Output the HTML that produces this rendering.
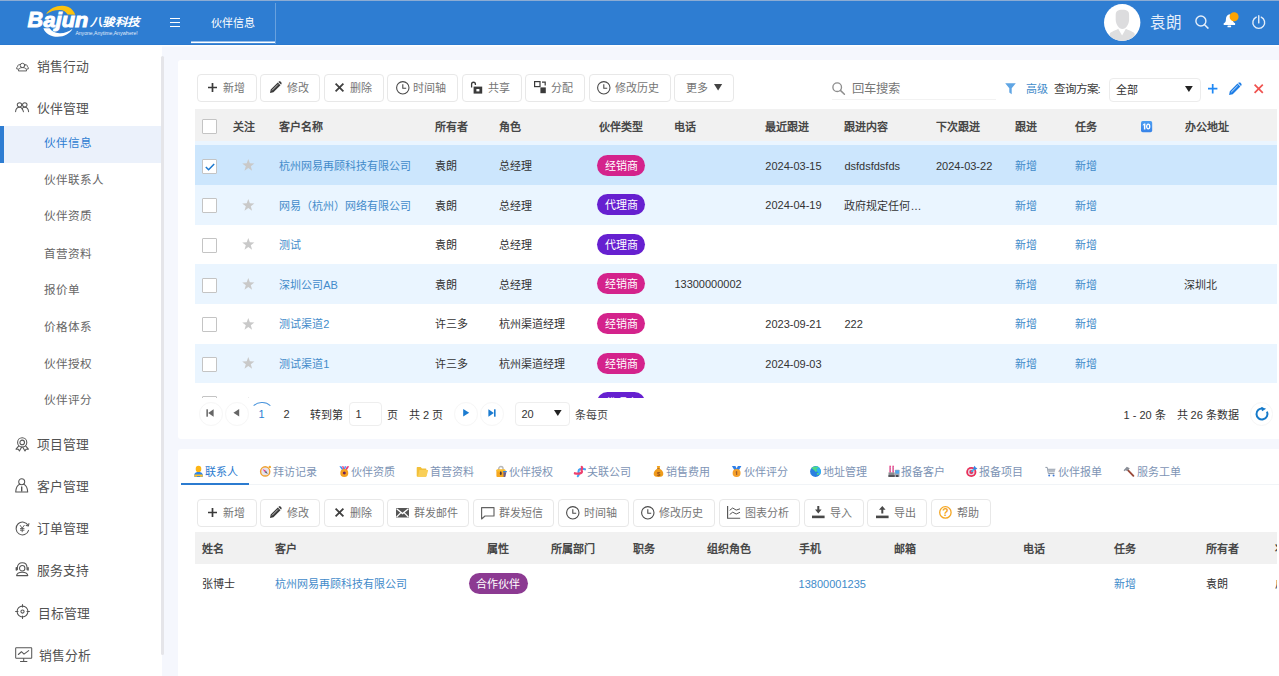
<!DOCTYPE html>
<html lang="zh-CN"><head><meta charset="utf-8"><title>伙伴信息</title>
<style>
html,body{margin:0;padding:0}
html{width:1279px;height:676px;overflow:hidden}
body{width:1279px;height:676px;overflow:hidden;position:relative;background:#f5f7fd;font-family:"Liberation Sans",sans-serif;font-size:11px;color:#333}
.a{position:absolute;display:block}
svg{overflow:visible}
.t{position:absolute;white-space:nowrap}
.btn{position:absolute;box-sizing:border-box;border:1px solid #e8e8e8;border-radius:4px;background:#fff;height:27.4px}
.pill{position:absolute;border-radius:11px;color:#fff;font-size:11px;text-align:center;height:21px;line-height:22px;white-space:nowrap}
.cb{position:absolute;box-sizing:border-box;width:14.8px;height:14.8px;border:1px solid #c4c4c4;background:#fff;border-radius:1px}
.circ{position:absolute;box-sizing:border-box;width:23.6px;height:23.6px;border:1px solid #f6f6f6;border-radius:50%;background:#fff}
</style></head><body>

<div class="a" style="left:0.00px;top:0.00px;width:1279.00px;height:45.00px;background:#2e7dd2"></div>
<div class="a" style="left:0.00px;top:0.00px;width:1279.00px;height:1.00px;background:#8cacd3"></div>
<div class="a" style="left:0.00px;top:44.00px;width:1279.00px;height:1.00px;background:#2a79cf"></div>
<div class="a" style="left:0.00px;top:45.00px;width:1279.00px;height:1.00px;background:#fff"></div>
<div class="a" style="left:0.00px;top:46.00px;width:1279.00px;height:1.00px;background:#fafbfe"></div>
<svg class="a" style="left:0.00px;top:0.00px;" width="160" height="44" viewBox="0 0 160 44" preserveAspectRatio="none">
<path d="M46 14 C50 8.5 56 5.6 62.5 5.8 C69 6 73.5 9.5 75.2 14.8 L67.6 14.6 C66 11.6 63.5 10 60 9.9 C55 9.8 50 11.4 46 14 Z" fill="#fcc20e"/>
<path d="M43.4 28.2 C45 33.5 51 36.8 57.5 36.8 C64.5 36.8 70 33.5 72.6 28.8 C68.5 32 64 33.4 59.5 33.2 C55 33 51.5 31.5 49.6 28.3 Z" fill="#fff"/>
<text x="27.6" y="26.8" font-family="Liberation Sans, sans-serif" font-size="22" font-weight="bold" font-style="italic" fill="#fff" stroke="#fff" stroke-width="0.9" textLength="15.6" lengthAdjust="spacingAndGlyphs">B</text>
<text x="43.6" y="26.8" font-family="Liberation Sans, sans-serif" font-size="20" font-weight="bold" font-style="italic" fill="#fff" stroke="#fff" stroke-width="1" textLength="44.6" lengthAdjust="spacingAndGlyphs">ajun</text>
<text x="90" y="26" font-family="Liberation Sans, sans-serif" font-size="11.3" font-weight="bold" font-style="italic" fill="#fff" textLength="49" lengthAdjust="spacingAndGlyphs">八骏科技</text>
<text x="75.4" y="35.2" font-family="Liberation Sans, sans-serif" font-size="5.5" fill="#e3eefa" textLength="62.3" lengthAdjust="spacingAndGlyphs">Anyone,Anytime,Anywhere!</text>
</svg>
<div class="a" style="left:169.60px;top:17.70px;width:10.90px;height:1.50px;background:#fff"></div>
<div class="a" style="left:169.60px;top:21.80px;width:10.90px;height:1.50px;background:#fff"></div>
<div class="a" style="left:169.60px;top:25.90px;width:10.90px;height:1.50px;background:#fff"></div>
<div class="a" style="left:275.00px;top:3.00px;width:1.00px;height:41.30px;background:rgba(255,255,255,.28)"></div>
<div class="a" style="left:191.00px;top:41.00px;width:84.00px;height:1.00px;background:rgba(255,255,255,.5)"></div>
<div class="a" style="left:191.00px;top:42.00px;width:84.00px;height:1.00px;background:#fff"></div>
<div class="a" style="left:191.00px;top:43.00px;width:84.00px;height:1.00px;background:rgba(255,255,255,.12)"></div>
<div class="t " style="left:211.30px;top:15px;font-size:11px;line-height:16px;color:#fff;font-weight:normal;">伙伴信息</div>
<svg class="a" style="left:1103.80px;top:3.50px;" width="36.4" height="37" viewBox="0 0 36.4 37" preserveAspectRatio="none">
<defs><clipPath id="av"><ellipse cx="18.2" cy="18.5" rx="18.2" ry="18.5"/></clipPath></defs>
<ellipse cx="18.2" cy="18.5" rx="18.2" ry="18.5" fill="#fff"/>
<g clip-path="url(#av)">
<path d="M14.2 24.7 L18.1 31.4 L21.9 24.7 C25 26.5 29.5 27.5 30.6 29.5 L31.5 38 L5 38 L5.8 29.5 C7 27.5 11.5 26.5 14.2 24.7 Z" fill="#dededf"/>
<path d="M11.7 11 C11.7 7.4 13.5 5.8 18.4 5.8 C23.3 5.8 25.1 7.4 25.1 11 L25.1 15.5 C25.1 20 22 25.1 18.4 25.1 C14.8 25.1 11.7 20 11.7 15.5 Z" fill="#dcdcde"/>
</g></svg>
<div class="t " style="left:1150.20px;top:13px;font-size:15.6px;line-height:20px;color:#e4eefa;font-weight:normal;">袁朗</div>
<svg class="a" style="left:1190.00px;top:10.00px;" width="20" height="20" viewBox="0 0 20 20" preserveAspectRatio="none"><circle cx="10.9" cy="11" r="5" fill="none" stroke="#e6effa" stroke-width="1.4"/><path d="M14.6 14.8 L18 18.1" stroke="#e6effa" stroke-width="1.5" stroke-linecap="round"/></svg>
<svg class="a" style="left:1222.00px;top:11.60px;" width="18" height="18" viewBox="0 0 18 18" preserveAspectRatio="none">
<path d="M7.4 2.2 C4.9 2.9 3.9 5 3.9 7.4 C3.9 9.6 3.2 10.4 1.7 11.2 L1.7 12.9 L13.1 12.9 L13.1 11.2 C11.6 10.4 10.9 9.6 10.9 7.4 C10.9 5 9.9 2.9 7.4 2.2 Z" fill="#fff"/>
<rect x="5.4" y="13.6" width="3.8" height="1.7" rx=".85" fill="#fff"/>
<circle cx="12.1" cy="4.7" r="4.5" fill="#fda403"/></svg>
<svg class="a" style="left:1250.00px;top:13.00px;" width="18" height="18" viewBox="0 0 18 18" preserveAspectRatio="none"><path d="M6.26 4.15 A5.9 5.9 0 1 0 11.24 4.15" fill="none" stroke="#e6effa" stroke-width="1.4" stroke-linecap="round"/><path d="M8.75 2.7 L8.75 9.9" stroke="#e6effa" stroke-width="1.4" stroke-linecap="round"/></svg>
<div class="a" style="left:0.00px;top:45.00px;width:161.50px;height:631.00px;background:#fff"></div>
<div class="a" style="left:161.00px;top:56.00px;width:3.20px;height:599.00px;background:#e5e5e9;border-radius:1.6px"></div>
<div class="a" style="left:0.00px;top:126.00px;width:161.20px;height:37.00px;background:#ebf1fb"></div>
<div class="a" style="left:0.00px;top:126.00px;width:3.70px;height:37.00px;background:#2e7dd2"></div>
<div class="t " style="left:36.90px;top:58px;font-size:12.8px;line-height:18px;color:#525252;font-weight:normal;">销售行动</div>
<div class="t " style="left:36.90px;top:100px;font-size:12.8px;line-height:18px;color:#525252;font-weight:normal;">伙伴管理</div>
<div class="t " style="left:36.90px;top:436px;font-size:12.8px;line-height:18px;color:#525252;font-weight:normal;">项目管理</div>
<div class="t " style="left:36.90px;top:478px;font-size:12.8px;line-height:18px;color:#525252;font-weight:normal;">客户管理</div>
<div class="t " style="left:36.90px;top:520px;font-size:12.8px;line-height:18px;color:#525252;font-weight:normal;">订单管理</div>
<div class="t " style="left:36.90px;top:562px;font-size:12.8px;line-height:18px;color:#525252;font-weight:normal;">服务支持</div>
<div class="t " style="left:37.90px;top:605px;font-size:12.8px;line-height:18px;color:#525252;font-weight:normal;">目标管理</div>
<div class="t " style="left:38.90px;top:647px;font-size:12.8px;line-height:18px;color:#525252;font-weight:normal;">销售分析</div>
<div class="t " style="left:43.70px;top:134px;font-size:11.6px;line-height:18px;color:#2e7dd2;font-weight:normal;">伙伴信息</div>
<div class="t " style="left:43.70px;top:171px;font-size:11.6px;line-height:18px;color:#666;font-weight:normal;">伙伴联系人</div>
<div class="t " style="left:43.70px;top:207px;font-size:11.6px;line-height:18px;color:#666;font-weight:normal;">伙伴资质</div>
<div class="t " style="left:43.70px;top:245px;font-size:11.6px;line-height:18px;color:#666;font-weight:normal;">首营资料</div>
<div class="t " style="left:43.70px;top:281px;font-size:11.6px;line-height:18px;color:#666;font-weight:normal;">报价单</div>
<div class="t " style="left:43.70px;top:318px;font-size:11.6px;line-height:18px;color:#666;font-weight:normal;">价格体系</div>
<div class="t " style="left:43.70px;top:355px;font-size:11.6px;line-height:18px;color:#666;font-weight:normal;">伙伴授权</div>
<div class="t " style="left:43.70px;top:391px;font-size:11.6px;line-height:18px;color:#666;font-weight:normal;">伙伴评分</div>
<svg class="a" style="left:15.60px;top:62.10px;" width="13" height="9.4" viewBox="0 0 14 11" preserveAspectRatio="none"><g fill="none" stroke="#555" stroke-width="1.05" stroke-linecap="round" stroke-linejoin="round"><circle cx="7" cy="4" r="2.5"/><path d="M2.6 10 C2.6 7.6 4.4 6.5 7 6.5 C9.6 6.5 11.4 7.6 11.4 10 Z"/><path d="M4.4 3 C3 2.6 1.8 3.6 2 5 C0.9 5.6 0.6 6.8 0.8 8.2 L2.4 8.2 M9.6 3 C11 2.6 12.2 3.6 12 5 C13.1 5.6 13.4 6.8 13.2 8.2 L11.6 8.2"/></g></svg>
<svg class="a" style="left:15.00px;top:101.90px;" width="14.2" height="10.6" viewBox="0 0 14.5 11.5" preserveAspectRatio="none"><g fill="none" stroke="#555" stroke-width="1.05" stroke-linecap="round" stroke-linejoin="round"><circle cx="4.6" cy="3.1" r="2.3"/><circle cx="10" cy="3.1" r="2.3"/><path d="M0.6 10.6 C0.8 7.6 2.4 5.8 4.6 5.8 C6 5.8 7 6.5 7.3 7.4 C7.6 6.5 8.6 5.8 10 5.8 C12.2 5.8 13.6 7.6 13.9 10.6"/><path d="M7.3 7.4 C8 8.2 8.4 9.2 8.6 10.6"/></g></svg>
<svg class="a" style="left:14.80px;top:437.20px;" width="14.5" height="14.5" viewBox="0 0 14.5 14.5" preserveAspectRatio="none"><g fill="none" stroke="#555" stroke-width="1.05" stroke-linecap="round" stroke-linejoin="round"><circle cx="7.2" cy="5.4" r="4.6"/><circle cx="7.2" cy="5.4" r="2.3"/><path d="M3.8 8.8 L1 12.2 L3.4 12.2 L4.4 14 L6.6 10.2 M10.6 8.8 L13.4 12.2 L11 12.2 L10 14 L7.8 10.2"/></g></svg>
<svg class="a" style="left:15.40px;top:478.00px;" width="13.5" height="15" viewBox="0 0 13.5 15" preserveAspectRatio="none"><g fill="none" stroke="#555" stroke-width="1.05" stroke-linecap="round" stroke-linejoin="round"><circle cx="6.7" cy="3.8" r="3"/><path d="M4.6 6.2 C2 7.4 0.9 9.8 0.7 14 L12.7 14 C12.5 9.8 11.4 7.4 8.8 6.2"/><path d="M6.7 9 L6.7 13" stroke-width="1.4"/></g></svg>
<svg class="a" style="left:14.60px;top:520.50px;" width="15" height="15" viewBox="0 0 15 15" preserveAspectRatio="none"><g fill="none" stroke="#555" stroke-width="1.05" stroke-linecap="round" stroke-linejoin="round"><path d="M13.2 4.6 A6.4 6.4 0 1 0 13.6 9.4"/><path d="M13.9 2.6 L13.4 4.9 L11.2 4.4"/><path d="M5.2 4.4 L7.2 7.2 L9.2 4.4 M7.2 7.2 L7.2 10.8 M5.4 7.6 L9 7.6 M5.4 9.2 L9 9.2" stroke-width=".9"/></g></svg>
<svg class="a" style="left:14.80px;top:562.20px;" width="14.5" height="14.5" viewBox="0 0 14.5 14.5" preserveAspectRatio="none"><g fill="none" stroke="#555" stroke-width="1.05" stroke-linecap="round" stroke-linejoin="round"><circle cx="7.2" cy="6.2" r="2.7"/><path d="M2.4 7.6 L2.4 5.6 C2.4 2.6 4.4 0.8 7.2 0.8 C10 0.8 12 2.6 12 5.6 L12 7.6"/><path d="M1.4 5.8 L1.4 8 M13 5.8 L13 8" stroke-width="1.6"/><path d="M1.6 13.6 C1.8 11.2 3.6 10.2 7.2 10.2 C10.8 10.2 12.6 11.2 12.8 13.6 Z"/></g></svg>
<svg class="a" style="left:14.60px;top:604.00px;" width="15" height="15" viewBox="0 0 15 15" preserveAspectRatio="none"><g fill="none" stroke="#555" stroke-width="1.05" stroke-linecap="round" stroke-linejoin="round"><circle cx="7.5" cy="7.5" r="5.4"/><circle cx="7.5" cy="7.5" r="1.6"/><path d="M7.5 0.6 L7.5 3 M7.5 12 L7.5 14.4 M0.6 7.5 L3 7.5 M12 7.5 L14.4 7.5"/></g></svg>
<svg class="a" style="left:14.80px;top:647.00px;" width="17.6" height="15.3" viewBox="0 0 18 15.5" preserveAspectRatio="none"><g fill="none" stroke="#555" stroke-width="1.05" stroke-linecap="round" stroke-linejoin="round"><rect x="0.7" y="0.7" width="16.4" height="10.8" rx="0.6"/><path d="M3.4 7.6 L6.6 4.8 L9.2 7.2 L14 3.6"/><path d="M8.9 11.6 L8.9 14.4 M5.6 14.6 L12.2 14.6"/></g></svg>
<div class="a" style="left:177.60px;top:59.60px;width:1101.40px;height:379.00px;background:#fff;border-radius:3px 0 0 3px"></div>
<div class="btn" style="left:197.20px;top:74.20px;width:59.60px"></div>
<div class="t " style="left:223.20px;top:80px;font-size:11px;line-height:16px;color:#757575;font-weight:normal;">新增</div>
<svg class="a" style="left:207.90px;top:82.80px;" width="9" height="9" viewBox="0 0 9 9" preserveAspectRatio="none"><path d="M4.5 0 L4.5 9 M0 4.5 L9 4.5" stroke="#3a3a3a" stroke-width="1.7"/></svg>
<div class="btn" style="left:260.40px;top:74.20px;width:59.80px"></div>
<div class="t " style="left:287.10px;top:80px;font-size:11px;line-height:16px;color:#757575;font-weight:normal;">修改</div>
<svg class="a" style="left:269.20px;top:80.80px;" width="13" height="13" viewBox="0 0 13 13" preserveAspectRatio="none"><path d="M1 12 L1.7 8.6 L8.8 1.5 L11.5 4.2 L4.4 11.3 Z M9.6 0.8 C10.2 0.2 11.1 0.2 11.7 0.8 L12.2 1.3 C12.8 1.9 12.8 2.8 12.2 3.4 L12 3.6 L9.4 1 Z" fill="#3a3a3a"/><path d="M3 9.4 L9 3.4" stroke="#fff" stroke-width=".7"/></svg>
<div class="btn" style="left:324.00px;top:74.20px;width:59.60px"></div>
<div class="t " style="left:350.00px;top:80px;font-size:11px;line-height:16px;color:#757575;font-weight:normal;">删除</div>
<svg class="a" style="left:334.60px;top:82.80px;" width="9" height="9" viewBox="0 0 9 9" preserveAspectRatio="none"><path d="M0.6 0.6 L8.4 8.4 M8.4 0.6 L0.6 8.4" stroke="#404040" stroke-width="1.8"/></svg>
<div class="btn" style="left:387.30px;top:74.20px;width:71.00px"></div>
<div class="t " style="left:413.30px;top:80px;font-size:11px;line-height:16px;color:#757575;font-weight:normal;">时间轴</div>
<svg class="a" style="left:395.70px;top:80.60px;" width="13.6" height="13.6" viewBox="0 0 13.6 13.6" preserveAspectRatio="none"><circle cx="6.8" cy="6.8" r="6.2" fill="none" stroke="#4a4a4a" stroke-width="1.1"/><path d="M6.8 3.1999999999999997 L6.8 7.2 L10.2 7.2" fill="none" stroke="#4a4a4a" stroke-width="1.1"/></svg>
<div class="btn" style="left:462.00px;top:74.20px;width:59.70px"></div>
<div class="t " style="left:488.00px;top:80px;font-size:11px;line-height:16px;color:#757575;font-weight:normal;">共享</div>
<svg class="a" style="left:470.40px;top:80.60px;" width="13" height="13" viewBox="0 0 13 13" preserveAspectRatio="none"><path d="M1.6 6.6 L1.6 3.2 C1.6 0.6 5.4 0.6 5.4 3.2 L5.4 4" fill="none" stroke="#3a3a3a" stroke-width="1.3"/><rect x="3.6" y="5.6" width="8.6" height="7" fill="#3a3a3a"/><rect x="6.4" y="8" width="3" height="2.4" fill="#fff"/></svg>
<div class="btn" style="left:525.30px;top:74.20px;width:60.00px"></div>
<div class="t " style="left:551.10px;top:80px;font-size:11px;line-height:16px;color:#757575;font-weight:normal;">分配</div>
<svg class="a" style="left:533.70px;top:80.60px;" width="13" height="13" viewBox="0 0 13 13" preserveAspectRatio="none"><rect x="0.6" y="0.6" width="5.4" height="5" fill="none" stroke="#3a3a3a" stroke-width="1.2"/><rect x="6.4" y="6.4" width="5.4" height="5.8" fill="#3a3a3a"/><path d="M8 1.2 L11.2 1.2 L11.2 4.6" fill="none" stroke="#3a3a3a" stroke-width="1.2"/></svg>
<div class="btn" style="left:589.00px;top:74.20px;width:81.60px"></div>
<div class="t " style="left:615.00px;top:80px;font-size:11px;line-height:16px;color:#757575;font-weight:normal;">修改历史</div>
<svg class="a" style="left:597.30px;top:80.60px;" width="13.6" height="13.6" viewBox="0 0 13.6 13.6" preserveAspectRatio="none"><circle cx="6.8" cy="6.8" r="6.2" fill="none" stroke="#4a4a4a" stroke-width="1.1"/><path d="M6.8 3.1999999999999997 L6.8 7.2 L10.2 7.2" fill="none" stroke="#4a4a4a" stroke-width="1.1"/></svg>
<div class="btn" style="left:674.00px;top:74.20px;width:59.60px"></div>
<div class="t " style="left:685.50px;top:80px;font-size:11px;line-height:16px;color:#757575;font-weight:normal;">更多</div>
<svg class="a" style="left:714.40px;top:84.30px;" width="8.2" height="6.6" viewBox="0 0 8.2 6.6" preserveAspectRatio="none"><path d="M0 0 L8.2 0 L4.1 6.6 Z" fill="#444"/></svg>
<svg class="a" style="left:832.00px;top:81.90px;" width="14" height="13" viewBox="0 0 14 13" preserveAspectRatio="none"><circle cx="5.2" cy="5.2" r="4.3" fill="none" stroke="#8e8e8e" stroke-width="1.35"/><path d="M8.4 8.4 L12.4 12.2" stroke="#8e8e8e" stroke-width="1.5" stroke-linecap="round"/></svg>
<div class="t " style="left:851.80px;top:80px;font-size:12.3px;line-height:18px;color:#777;font-weight:normal;">回车搜索</div>
<div class="a" style="left:832.00px;top:98.60px;width:164.00px;height:1.00px;background:#f2f2f2"></div>
<svg class="a" style="left:1004.80px;top:83.40px;" width="11" height="11.4" viewBox="0 0 11 11.4" preserveAspectRatio="none"><path d="M0.2 0.3 L10.8 0.3 L6.7 5.2 L6.7 11.2 L4.3 9.6 L4.3 5.2 Z" fill="#5fa5e4"/></svg>
<div class="t " style="left:1026.00px;top:81px;font-size:11px;line-height:16px;color:#428bca;font-weight:normal;">高级</div>
<div class="t " style="left:1053.60px;top:80px;font-size:11.5px;line-height:18px;color:#3c3c3c;font-weight:normal;">查询方案:</div>
<div class="a" style="left:1109.4px;top:78.2px;width:91.4px;height:23.4px;box-sizing:border-box;border:1px solid #ececec;border-radius:4px;background:#fff"></div>
<div class="t " style="left:1115.80px;top:82px;font-size:11px;line-height:16px;color:#333;font-weight:normal;">全部</div>
<svg class="a" style="left:1185.40px;top:86.00px;" width="7.8" height="6" viewBox="0 0 7.8 6" preserveAspectRatio="none"><path d="M0 0 L7.8 0 L3.9 6 Z" fill="#222"/></svg>
<svg class="a" style="left:1207.80px;top:84.30px;" width="9.4" height="9.4" viewBox="0 0 9.4 9.4" preserveAspectRatio="none"><path d="M4.7 0 L4.7 9.4 M0 4.7 L9.4 4.7" stroke="#1e88f5" stroke-width="1.7"/></svg>
<svg class="a" style="left:1227.60px;top:81.60px;" width="14" height="14" viewBox="0 0 13 13" preserveAspectRatio="none"><path d="M1 12 L1.7 8.6 L8.8 1.5 L11.5 4.2 L4.4 11.3 Z M9.6 0.8 C10.2 0.2 11.1 0.2 11.7 0.8 L12.2 1.3 C12.8 1.9 12.8 2.8 12.2 3.4 L12 3.6 L9.4 1 Z" fill="#1e7ee6"/><path d="M3 9.4 L9 3.4" stroke="#fff" stroke-width=".7"/></svg>
<svg class="a" style="left:1253.60px;top:84.30px;" width="9.4" height="9.4" viewBox="0 0 9.4 9.4" preserveAspectRatio="none"><path d="M0.6 0.6 L8.8 8.8 M8.8 0.6 L0.6 8.8" stroke="#f0524f" stroke-width="1.7"/></svg>
<div class="a" style="left:195.40px;top:109.20px;width:1081.60px;height:32.20px;background:#f1f1f1"></div>
<div class="a" style="left:195.40px;top:141.40px;width:1081.60px;height:4.00px;background:#eaf5ff"></div>
<div class="a" style="left:195px;top:145px;width:1082px;height:253px;overflow:hidden">
<div class="a" style="left:0.00px;top:0.00px;width:1082.00px;height:40.00px;background:#cce6fd"></div>
<div class="cb" style="left:7.10px;top:14px"></div>
<svg class="a" style="left:9.50px;top:17.70px;" width="10" height="8" viewBox="0 0 10 8" preserveAspectRatio="none"><path d="M0.8 4 L3.6 6.8 L9.2 0.9" fill="none" stroke="#1b78cf" stroke-width="1.5"/></svg>
<svg class="a" style="left:46.90px;top:14.45px;" width="12.6" height="12" viewBox="0 0 12.6 12" preserveAspectRatio="none"><path d="M6.3 0 L7.85 4.3 L12.4 4.45 L8.8 7.25 L10.1 11.7 L6.3 9.1 L2.5 11.7 L3.8 7.25 L0.2 4.45 L4.75 4.3 Z" fill="#c9c9c9"/></svg>
<div class="t " style="left:84.20px;top:13px;font-size:11px;line-height:16px;color:#428bca;font-weight:normal;">杭州网易再顾科技有限公司</div>
<div class="t " style="left:240.00px;top:13px;font-size:11px;line-height:16px;color:#333;font-weight:normal;">袁朗</div>
<div class="t " style="left:304.40px;top:13px;font-size:11px;line-height:16px;color:#333;font-weight:normal;">总经理</div>
<div class="pill" style="left:402.20px;top:10px;width:48px;background:#d4238c">经销商</div>
<div class="t " style="left:479.40px;top:13px;font-size:11px;line-height:16px;color:#333;font-weight:normal;"></div>
<div class="t " style="left:570.30px;top:13px;font-size:11px;line-height:16px;color:#333;font-weight:normal;">2024-03-15</div>
<div class="t " style="left:649.40px;top:13px;font-size:11px;line-height:16px;color:#333;font-weight:normal;">dsfdsfdsfds</div>
<div class="t " style="left:741.00px;top:13px;font-size:11px;line-height:16px;color:#333;font-weight:normal;">2024-03-22</div>
<div class="t " style="left:819.60px;top:13px;font-size:11px;line-height:16px;color:#428bca;font-weight:normal;">新增</div>
<div class="t " style="left:879.60px;top:13px;font-size:11px;line-height:16px;color:#428bca;font-weight:normal;">新增</div>
<div class="t " style="left:989.40px;top:13px;font-size:11px;line-height:16px;color:#333;font-weight:normal;"></div>
<div class="a" style="left:0.00px;top:40.00px;width:1082.00px;height:40.00px;background:#eaf5ff"></div>
<div class="cb" style="left:7.10px;top:53px"></div>
<svg class="a" style="left:46.90px;top:53.80px;" width="12.6" height="12" viewBox="0 0 12.6 12" preserveAspectRatio="none"><path d="M6.3 0 L7.85 4.3 L12.4 4.45 L8.8 7.25 L10.1 11.7 L6.3 9.1 L2.5 11.7 L3.8 7.25 L0.2 4.45 L4.75 4.3 Z" fill="#c9c9c9"/></svg>
<div class="t " style="left:84.20px;top:53px;font-size:11px;line-height:16px;color:#428bca;font-weight:normal;">网易（杭州）网络有限公司</div>
<div class="t " style="left:240.00px;top:53px;font-size:11px;line-height:16px;color:#333;font-weight:normal;">袁朗</div>
<div class="t " style="left:304.40px;top:53px;font-size:11px;line-height:16px;color:#333;font-weight:normal;">总经理</div>
<div class="pill" style="left:402.20px;top:49px;width:48px;background:#6620d0">代理商</div>
<div class="t " style="left:479.40px;top:52px;font-size:11px;line-height:16px;color:#333;font-weight:normal;"></div>
<div class="t " style="left:570.30px;top:52px;font-size:11px;line-height:16px;color:#333;font-weight:normal;">2024-04-19</div>
<div class="t " style="left:649.40px;top:53px;font-size:11px;line-height:16px;color:#333;font-weight:normal;">政府规定任何…</div>
<div class="t " style="left:741.00px;top:52px;font-size:11px;line-height:16px;color:#333;font-weight:normal;"></div>
<div class="t " style="left:819.60px;top:53px;font-size:11px;line-height:16px;color:#428bca;font-weight:normal;">新增</div>
<div class="t " style="left:879.60px;top:53px;font-size:11px;line-height:16px;color:#428bca;font-weight:normal;">新增</div>
<div class="t " style="left:989.40px;top:52px;font-size:11px;line-height:16px;color:#333;font-weight:normal;"></div>
<div class="a" style="left:0.00px;top:80.00px;width:1082.00px;height:39.00px;background:#fff"></div>
<div class="cb" style="left:7.10px;top:93px"></div>
<svg class="a" style="left:46.90px;top:93.45px;" width="12.6" height="12" viewBox="0 0 12.6 12" preserveAspectRatio="none"><path d="M6.3 0 L7.85 4.3 L12.4 4.45 L8.8 7.25 L10.1 11.7 L6.3 9.1 L2.5 11.7 L3.8 7.25 L0.2 4.45 L4.75 4.3 Z" fill="#c9c9c9"/></svg>
<div class="t " style="left:84.20px;top:92px;font-size:11px;line-height:16px;color:#428bca;font-weight:normal;">测试</div>
<div class="t " style="left:240.00px;top:92px;font-size:11px;line-height:16px;color:#333;font-weight:normal;">袁朗</div>
<div class="t " style="left:304.40px;top:92px;font-size:11px;line-height:16px;color:#333;font-weight:normal;">总经理</div>
<div class="pill" style="left:402.20px;top:89px;width:48px;background:#6620d0">代理商</div>
<div class="t " style="left:479.40px;top:92px;font-size:11px;line-height:16px;color:#333;font-weight:normal;"></div>
<div class="t " style="left:570.30px;top:92px;font-size:11px;line-height:16px;color:#333;font-weight:normal;"></div>
<div class="t " style="left:649.40px;top:92px;font-size:11px;line-height:16px;color:#333;font-weight:normal;"></div>
<div class="t " style="left:741.00px;top:92px;font-size:11px;line-height:16px;color:#333;font-weight:normal;"></div>
<div class="t " style="left:819.60px;top:92px;font-size:11px;line-height:16px;color:#428bca;font-weight:normal;">新增</div>
<div class="t " style="left:879.60px;top:92px;font-size:11px;line-height:16px;color:#428bca;font-weight:normal;">新增</div>
<div class="t " style="left:989.40px;top:92px;font-size:11px;line-height:16px;color:#333;font-weight:normal;"></div>
<div class="a" style="left:0.00px;top:119.00px;width:1082.00px;height:40.00px;background:#eaf5ff"></div>
<div class="cb" style="left:7.10px;top:133px"></div>
<svg class="a" style="left:46.90px;top:133.00px;" width="12.6" height="12" viewBox="0 0 12.6 12" preserveAspectRatio="none"><path d="M6.3 0 L7.85 4.3 L12.4 4.45 L8.8 7.25 L10.1 11.7 L6.3 9.1 L2.5 11.7 L3.8 7.25 L0.2 4.45 L4.75 4.3 Z" fill="#c9c9c9"/></svg>
<div class="t " style="left:84.20px;top:132px;font-size:11px;line-height:16px;color:#428bca;font-weight:normal;">深圳公司AB</div>
<div class="t " style="left:240.00px;top:132px;font-size:11px;line-height:16px;color:#333;font-weight:normal;">袁朗</div>
<div class="t " style="left:304.40px;top:132px;font-size:11px;line-height:16px;color:#333;font-weight:normal;">总经理</div>
<div class="pill" style="left:402.20px;top:128px;width:48px;background:#d4238c">经销商</div>
<div class="t " style="left:479.40px;top:131px;font-size:11px;line-height:16px;color:#333;font-weight:normal;">13300000002</div>
<div class="t " style="left:570.30px;top:131px;font-size:11px;line-height:16px;color:#333;font-weight:normal;"></div>
<div class="t " style="left:649.40px;top:131px;font-size:11px;line-height:16px;color:#333;font-weight:normal;"></div>
<div class="t " style="left:741.00px;top:131px;font-size:11px;line-height:16px;color:#333;font-weight:normal;"></div>
<div class="t " style="left:819.60px;top:132px;font-size:11px;line-height:16px;color:#428bca;font-weight:normal;">新增</div>
<div class="t " style="left:879.60px;top:132px;font-size:11px;line-height:16px;color:#428bca;font-weight:normal;">新增</div>
<div class="t " style="left:989.40px;top:132px;font-size:11px;line-height:16px;color:#333;font-weight:normal;">深圳北</div>
<div class="a" style="left:0.00px;top:159.00px;width:1082.00px;height:40.00px;background:#fff"></div>
<div class="cb" style="left:7.10px;top:172px"></div>
<svg class="a" style="left:46.90px;top:172.60px;" width="12.6" height="12" viewBox="0 0 12.6 12" preserveAspectRatio="none"><path d="M6.3 0 L7.85 4.3 L12.4 4.45 L8.8 7.25 L10.1 11.7 L6.3 9.1 L2.5 11.7 L3.8 7.25 L0.2 4.45 L4.75 4.3 Z" fill="#c9c9c9"/></svg>
<div class="t " style="left:84.20px;top:171px;font-size:11px;line-height:16px;color:#428bca;font-weight:normal;">测试渠道2</div>
<div class="t " style="left:240.00px;top:171px;font-size:11px;line-height:16px;color:#333;font-weight:normal;">许三多</div>
<div class="t " style="left:304.40px;top:171px;font-size:11px;line-height:16px;color:#333;font-weight:normal;">杭州渠道经理</div>
<div class="pill" style="left:402.20px;top:168px;width:48px;background:#d4238c">经销商</div>
<div class="t " style="left:479.40px;top:171px;font-size:11px;line-height:16px;color:#333;font-weight:normal;"></div>
<div class="t " style="left:570.30px;top:171px;font-size:11px;line-height:16px;color:#333;font-weight:normal;">2023-09-21</div>
<div class="t " style="left:649.40px;top:171px;font-size:11px;line-height:16px;color:#333;font-weight:normal;">222</div>
<div class="t " style="left:741.00px;top:171px;font-size:11px;line-height:16px;color:#333;font-weight:normal;"></div>
<div class="t " style="left:819.60px;top:171px;font-size:11px;line-height:16px;color:#428bca;font-weight:normal;">新增</div>
<div class="t " style="left:879.60px;top:171px;font-size:11px;line-height:16px;color:#428bca;font-weight:normal;">新增</div>
<div class="t " style="left:989.40px;top:171px;font-size:11px;line-height:16px;color:#333;font-weight:normal;"></div>
<div class="a" style="left:0.00px;top:199.00px;width:1082.00px;height:39.00px;background:#eaf5ff"></div>
<div class="cb" style="left:7.10px;top:212px"></div>
<svg class="a" style="left:46.90px;top:212.20px;" width="12.6" height="12" viewBox="0 0 12.6 12" preserveAspectRatio="none"><path d="M6.3 0 L7.85 4.3 L12.4 4.45 L8.8 7.25 L10.1 11.7 L6.3 9.1 L2.5 11.7 L3.8 7.25 L0.2 4.45 L4.75 4.3 Z" fill="#c9c9c9"/></svg>
<div class="t " style="left:84.20px;top:211px;font-size:11px;line-height:16px;color:#428bca;font-weight:normal;">测试渠道1</div>
<div class="t " style="left:240.00px;top:211px;font-size:11px;line-height:16px;color:#333;font-weight:normal;">许三多</div>
<div class="t " style="left:304.40px;top:211px;font-size:11px;line-height:16px;color:#333;font-weight:normal;">杭州渠道经理</div>
<div class="pill" style="left:402.20px;top:208px;width:48px;background:#d4238c">经销商</div>
<div class="t " style="left:479.40px;top:211px;font-size:11px;line-height:16px;color:#333;font-weight:normal;"></div>
<div class="t " style="left:570.30px;top:211px;font-size:11px;line-height:16px;color:#333;font-weight:normal;">2024-09-03</div>
<div class="t " style="left:649.40px;top:211px;font-size:11px;line-height:16px;color:#333;font-weight:normal;"></div>
<div class="t " style="left:741.00px;top:211px;font-size:11px;line-height:16px;color:#333;font-weight:normal;"></div>
<div class="t " style="left:819.60px;top:211px;font-size:11px;line-height:16px;color:#428bca;font-weight:normal;">新增</div>
<div class="t " style="left:879.60px;top:211px;font-size:11px;line-height:16px;color:#428bca;font-weight:normal;">新增</div>
<div class="t " style="left:989.40px;top:211px;font-size:11px;line-height:16px;color:#333;font-weight:normal;"></div>
<div class="a" style="left:0.00px;top:238.00px;width:1082.00px;height:40.00px;background:#fff"></div>
<div class="cb" style="left:7.10px;top:251px"></div>
<svg class="a" style="left:46.90px;top:251.80px;" width="12.6" height="12" viewBox="0 0 12.6 12" preserveAspectRatio="none"><path d="M6.3 0 L7.85 4.3 L12.4 4.45 L8.8 7.25 L10.1 11.7 L6.3 9.1 L2.5 11.7 L3.8 7.25 L0.2 4.45 L4.75 4.3 Z" fill="#c9c9c9"/></svg>
<div class="t " style="left:84.20px;top:251px;font-size:11px;line-height:16px;color:#428bca;font-weight:normal;">测试渠道</div>
<div class="t " style="left:240.00px;top:251px;font-size:11px;line-height:16px;color:#333;font-weight:normal;">许三多</div>
<div class="t " style="left:304.40px;top:251px;font-size:11px;line-height:16px;color:#333;font-weight:normal;">杭州渠道经理</div>
<div class="pill" style="left:402.20px;top:247px;width:48px;background:#6620d0">代理商</div>
<div class="t " style="left:479.40px;top:250px;font-size:11px;line-height:16px;color:#333;font-weight:normal;"></div>
<div class="t " style="left:570.30px;top:250px;font-size:11px;line-height:16px;color:#333;font-weight:normal;"></div>
<div class="t " style="left:649.40px;top:250px;font-size:11px;line-height:16px;color:#333;font-weight:normal;"></div>
<div class="t " style="left:741.00px;top:250px;font-size:11px;line-height:16px;color:#333;font-weight:normal;"></div>
<div class="t " style="left:819.60px;top:251px;font-size:11px;line-height:16px;color:#428bca;font-weight:normal;">新增</div>
<div class="t " style="left:879.60px;top:251px;font-size:11px;line-height:16px;color:#428bca;font-weight:normal;">新增</div>
<div class="t " style="left:989.40px;top:250px;font-size:11px;line-height:16px;color:#333;font-weight:normal;"></div>
</div>
<div class="cb" style="left:202px;top:119.00px"></div>
<div class="t " style="left:233.30px;top:119px;font-size:11px;line-height:16px;color:#474747;font-weight:bold;">关注</div>
<div class="t " style="left:279.20px;top:119px;font-size:11px;line-height:16px;color:#474747;font-weight:bold;">客户名称</div>
<div class="t " style="left:435.00px;top:119px;font-size:11px;line-height:16px;color:#474747;font-weight:bold;">所有者</div>
<div class="t " style="left:499.40px;top:119px;font-size:11px;line-height:16px;color:#474747;font-weight:bold;">角色</div>
<div class="t " style="left:599.20px;top:119px;font-size:11px;line-height:16px;color:#474747;font-weight:bold;">伙伴类型</div>
<div class="t " style="left:673.80px;top:119px;font-size:11px;line-height:16px;color:#474747;font-weight:bold;">电话</div>
<div class="t " style="left:765.30px;top:119px;font-size:11px;line-height:16px;color:#474747;font-weight:bold;">最近跟进</div>
<div class="t " style="left:844.40px;top:119px;font-size:11px;line-height:16px;color:#474747;font-weight:bold;">跟进内容</div>
<div class="t " style="left:936.00px;top:119px;font-size:11px;line-height:16px;color:#474747;font-weight:bold;">下次跟进</div>
<div class="t " style="left:1014.60px;top:119px;font-size:11px;line-height:16px;color:#474747;font-weight:bold;">跟进</div>
<div class="t " style="left:1074.60px;top:119px;font-size:11px;line-height:16px;color:#474747;font-weight:bold;">任务</div>
<div class="t " style="left:1185.00px;top:119px;font-size:11px;line-height:16px;color:#474747;font-weight:bold;">办公地址</div>
<svg class="a" style="left:1140.80px;top:120.70px;" width="11.2" height="11.2" viewBox="0 0 11.2 11.2" preserveAspectRatio="none"><defs><linearGradient id="g10" x1="0" y1="0" x2="0" y2="1"><stop offset="0" stop-color="#4c9ef2"/><stop offset="1" stop-color="#3783e8"/></linearGradient></defs><rect width="11.2" height="11.2" rx="1.7" fill="url(#g10)"/><path d="M1.4 4.3 L3 2.6 L4.4 2.6 L4.4 8.5 L2.9 8.5 L2.9 4.3 Z" fill="#fff"/><ellipse cx="7.2" cy="5.55" rx="1.55" ry="2.4" fill="none" stroke="#fff" stroke-width="1.3"/></svg>
<div class="circ" style="left:199.30px;top:402.10px;"></div>
<svg class="a" style="left:206.20px;top:409.00px;" width="8" height="8" viewBox="0 0 8 8" preserveAspectRatio="none"><rect x="0.4" y="0.3" width="1.5" height="7.4" fill="#666"/><path d="M7.6 0.3 L7.6 7.7 L2.2 4 Z" fill="#666"/></svg>
<div class="circ" style="left:225.20px;top:402.10px;"></div>
<svg class="a" style="left:232.60px;top:409.30px;" width="6.4" height="7.4" viewBox="0 0 6.4 7.4" preserveAspectRatio="none"><path d="M6.2 0 L6.2 7.4 L0.4 3.7 Z" fill="#666"/></svg>
<div class="circ" style="left:250.2px;top:401.50px;border-color:#4b95dc transparent transparent transparent"></div>
<div class="t " style="left:258.60px;top:406px;font-size:11px;line-height:16px;color:#2b7fd3;font-weight:normal;">1</div>
<div class="t " style="left:283.60px;top:406px;font-size:11px;line-height:16px;color:#333;font-weight:normal;">2</div>
<div class="t " style="left:309.80px;top:407px;font-size:11px;line-height:16px;color:#333;font-weight:normal;">转到第</div>
<div class="a" style="left:349.2px;top:402.10px;width:32.4px;height:23.6px;box-sizing:border-box;border:1px solid #eee;border-radius:4px;background:#fff"></div>
<div class="t " style="left:355.40px;top:406px;font-size:11px;line-height:16px;color:#333;font-weight:normal;">1</div>
<div class="t " style="left:387.20px;top:407px;font-size:11px;line-height:16px;color:#333;font-weight:normal;">页</div>
<div class="t " style="left:409.00px;top:407px;font-size:11px;line-height:16px;color:#333;font-weight:normal;">共 2 页</div>
<div class="circ" style="left:454.40px;top:402.10px;"></div>
<svg class="a" style="left:463.20px;top:409.10px;" width="6.4" height="7.6" viewBox="0 0 6.4 7.6" preserveAspectRatio="none"><path d="M0.2 0 L0.2 7.6 L6.2 3.8 Z" fill="#1b7bd0"/></svg>
<div class="circ" style="left:480.30px;top:402.10px;"></div>
<svg class="a" style="left:487.60px;top:409.00px;" width="8" height="8" viewBox="0 0 8 8" preserveAspectRatio="none"><path d="M0.4 0.3 L0.4 7.7 L5.8 4 Z" fill="#1b7bd0"/><rect x="6" y="0.3" width="1.6" height="7.4" fill="#1b7bd0"/></svg>
<div class="a" style="left:514.8px;top:402.10px;width:55px;height:23.6px;box-sizing:border-box;border:1px solid #eee;border-radius:4px;background:#fff"></div>
<div class="t " style="left:521.40px;top:406px;font-size:11px;line-height:16px;color:#333;font-weight:normal;">20</div>
<svg class="a" style="left:554.20px;top:409.60px;" width="7.6" height="6" viewBox="0 0 7.6 6" preserveAspectRatio="none"><path d="M0 0 L7.6 0 L3.8 6 Z" fill="#222"/></svg>
<div class="t " style="left:575.40px;top:407px;font-size:11px;line-height:16px;color:#444;font-weight:normal;">条每页</div>
<div class="t " style="left:1123.60px;top:407px;font-size:11px;line-height:16px;color:#333;font-weight:normal;">1 - 20 条</div>
<div class="t " style="left:1176.50px;top:407px;font-size:11px;line-height:16px;color:#333;font-weight:normal;">共 26 条数据</div>
<div class="circ" style="left:1249.90px;top:402.10px;"></div>
<svg class="a" style="left:1254.60px;top:406.80px;" width="14" height="14" viewBox="0 0 14 14" preserveAspectRatio="none"><path d="M11.98 4.68 A5.5 5.5 0 1 1 7.96 1.58" fill="none" stroke="#1479c9" stroke-width="2"/><path d="M6.1 0 L11.2 1.8 L7 4.3 Z" fill="#1479c9"/></svg>
<div class="a" style="left:177.60px;top:449.30px;width:1101.40px;height:226.70px;background:#fff;border-radius:3px 0 0 0"></div>
<div class="a" style="left:180.50px;top:484.30px;width:1098.50px;height:1.00px;background:#f1f4f7"></div>
<div class="a" style="left:180.50px;top:483.30px;width:68.40px;height:2.00px;background:#2b7bd0"></div>
<svg class="a" style="left:193.70px;top:466.00px;" width="11.4" height="11.2" viewBox="0 0 11.4 11.2" preserveAspectRatio="none"><ellipse cx="4.5" cy="2.9" rx="2.8" ry="3.2" fill="#fdb515"/><path d="M0.4 11 L0.4 8.6 C0.6 6.8 2 6 3.4 5.9 L5.6 5.9 C7 6 8.4 6.8 8.7 8.6 L8.7 11 Z" fill="#2f86e6"/><rect x="0.3" y="8.5" width="8.5" height="2.2" rx="1" fill="#fcc02c"/><rect x="3" y="10.2" width="3" height="0.8" fill="#2f86e6"/></svg>
<div class="t " style="left:204.90px;top:464px;font-size:11px;line-height:16px;color:#2b7bd0;font-weight:normal;">联系人</div>
<svg class="a" style="left:260.00px;top:466.00px;" width="11.4" height="11.2" viewBox="0 0 11.4 11.2" preserveAspectRatio="none"><circle cx="9.8" cy="0.9" r="1.2" fill="#f3a92a"/><circle cx="5.2" cy="5.4" r="4.6" fill="#e6e2ec" stroke="#f0a030" stroke-width="1.4"/><path d="M2.6 3 L5.9 4.6 L4.5 6.1 Z" fill="#ec3f8e"/><path d="M7.8 7.9 L4.6 6.2 L6 4.7 Z" fill="#5a5a64"/></svg>
<div class="t " style="left:273.10px;top:464px;font-size:11px;line-height:16px;color:#7d94b5;font-weight:normal;">拜访记录</div>
<svg class="a" style="left:338.70px;top:466.00px;" width="11.4" height="11.2" viewBox="0 0 11.4 11.2" preserveAspectRatio="none"><path d="M0.4 0.3 L2.2 0.3 L5 4 L3.4 4.6 Z" fill="#3f8ff0"/><path d="M2.8 0.3 L4.6 0.3 L5.6 3.4 L4.6 3.8 Z" fill="#f0457c"/><path d="M7.4 0.3 L5.6 0.3 L4.8 3.4 L5.8 3.8 Z" fill="#3f8ff0"/><path d="M10.2 0.3 L8.2 0.3 L5.8 4 L7.6 4.6 Z" fill="#e83a78"/><circle cx="5.3" cy="7" r="4" fill="#f5a020"/><circle cx="5.3" cy="7" r="1.5" fill="#6a2360"/></svg>
<div class="t " style="left:351.30px;top:464px;font-size:11px;line-height:16px;color:#7d94b5;font-weight:normal;">伙伴资质</div>
<svg class="a" style="left:416.30px;top:466.00px;" width="11.4" height="11.2" viewBox="0 0 11.4 11.2" preserveAspectRatio="none"><path d="M0.7 2 C0.7 1.4 1.1 1 1.7 1 L4.6 1 L6 2.6 L9.6 2.6 C10.2 2.6 10.4 3 10.4 3.6 L10.4 9.8 C10.4 10.4 10 10.7 9.4 10.7 L1.7 10.7 C1.1 10.7 0.7 10.3 0.7 9.7 Z" fill="#f2c03a"/><path d="M3.4 4 L11.6 4 C12.1 4 12.2 4.4 12 4.9 L10.6 10.1 C10.5 10.5 10.2 10.7 9.8 10.7 L2 10.7 Z" fill="#f9cf58"/></svg>
<div class="t " style="left:430.00px;top:464px;font-size:11px;line-height:16px;color:#7d94b5;font-weight:normal;">首营资料</div>
<svg class="a" style="left:495.50px;top:466.00px;" width="11.4" height="11.2" viewBox="0 0 11.4 11.2" preserveAspectRatio="none"><path d="M2.7 4 L2.7 3 C2.7 -0.3 7.1 -0.3 7.1 3 L7.1 4" fill="none" stroke="#b8b8b8" stroke-width="1.4"/><rect x="0.4" y="3.4" width="9" height="7.6" rx="1" fill="#f6a821"/><rect x="0.4" y="3.4" width="9" height="2.2" rx="1" fill="#fbc02d"/><ellipse cx="4.8" cy="7.2" rx="0.9" ry="2" fill="#4a3a3a"/><rect x="6.9" y="4.9" width="4.1" height="1.3" rx=".6" fill="#2f86e6"/><path d="M7.4 6.2 L10.4 6.2 L9.2 10.9 L7.6 10.9 Z" fill="#6b5b8a"/></svg>
<div class="t " style="left:508.80px;top:464px;font-size:11px;line-height:16px;color:#7d94b5;font-weight:normal;">伙伴授权</div>
<svg class="a" style="left:573.80px;top:466.00px;" width="11.4" height="11.2" viewBox="0 0 11.4 11.2" preserveAspectRatio="none"><path d="M11 3.3 C7.4 2 4.4 3.4 4.5 5.4 C4.6 7.4 5.8 8.2 3.8 10.2" fill="none" stroke="#45a3f5" stroke-width="2.1" stroke-linecap="round"/><path d="M7.8 0.9 C9.2 2.6 6.6 3.4 7.8 5.2 C8.8 7 4.4 8.4 0.9 7.3" fill="none" stroke="#ee3f6e" stroke-width="2.3" stroke-linecap="round"/></svg>
<div class="t " style="left:587.00px;top:464px;font-size:11px;line-height:16px;color:#7d94b5;font-weight:normal;">关联公司</div>
<svg class="a" style="left:652.50px;top:466.00px;" width="11.4" height="11.2" viewBox="0 0 11.4 11.2" preserveAspectRatio="none"><path d="M3.8 0.2 C4.6 -0.2 6.2 -0.2 7.2 0.2 L6.6 2.2 L4.4 2.2 Z" fill="#f3a21c"/><rect x="4.2" y="2" width="2.6" height="0.9" fill="#9a5a1a"/><path d="M4.2 2.8 L6.8 2.8 C9.6 4.4 10.6 6.4 10.2 8.8 C9.8 10.6 8.4 11 5.5 11 C2.6 11 1.2 10.6 0.8 8.8 C0.4 6.4 1.4 4.4 4.2 2.8 Z" fill="#f09c1c"/><text x="5.5" y="9.6" font-family="Liberation Sans, sans-serif" font-size="6.2" font-weight="bold" fill="#93501a" text-anchor="middle">$</text></svg>
<div class="t " style="left:665.50px;top:464px;font-size:11px;line-height:16px;color:#7d94b5;font-weight:normal;">销售费用</div>
<svg class="a" style="left:730.80px;top:466.00px;" width="11.4" height="11.2" viewBox="0 0 11.4 11.2" preserveAspectRatio="none"><path d="M0.9 0 L4.4 0 L6.2 3.4 L3.6 4.4 Z" fill="#2f7fe8"/><path d="M10.4 0 L6.9 0 L5.1 3.4 L7.7 4.4 Z" fill="#2f7fe8"/><circle cx="5.6" cy="7.1" r="4" fill="#f5a02a"/><rect x="5.1" y="5.2" width="1.1" height="3.8" fill="#9a5a2a"/><path d="M4.2 6.2 L5.4 5.2 L5.4 6.2 Z" fill="#9a5a2a"/></svg>
<div class="t " style="left:743.80px;top:464px;font-size:11px;line-height:16px;color:#7d94b5;font-weight:normal;">伙伴评分</div>
<svg class="a" style="left:809.50px;top:466.00px;" width="11.4" height="11.2" viewBox="0 0 11.4 11.2" preserveAspectRatio="none"><circle cx="5.5" cy="5.5" r="5.4" fill="#2a7fe0"/><path d="M5.5 0.1 A5.4 5.4 0 0 1 9.6 9 L7 5 Z" fill="#2db2f5"/><path d="M1.4 1.9 C3 0.4 6.6 -0.2 9 1.4 C8.6 2 7.4 1.8 6.8 2.6 C6.4 3.6 7.4 5 6.6 5.8 C5.8 6.2 5.2 5.4 4.4 4.4 C3.6 3.4 2.4 2.8 1.4 1.9 Z" fill="#4ed987"/><path d="M6.9 7.2 C7.6 6.6 8.8 7 9.2 7.8 C8.8 8.6 8.2 9.2 7.6 9 C7 8.6 6.6 7.8 6.9 7.2 Z" fill="#4ed987"/></svg>
<div class="t " style="left:822.50px;top:464px;font-size:11px;line-height:16px;color:#7d94b5;font-weight:normal;">地址管理</div>
<svg class="a" style="left:887.50px;top:466.00px;" width="11.4" height="11.2" viewBox="0 0 11.4 11.2" preserveAspectRatio="none"><rect x="1.4" y="-0.3" width="1.5" height="7" fill="#ee3f86"/><rect x="4.4" y="-0.3" width="1.5" height="7" fill="#ee3f86"/><rect x="1.4" y="1.4" width="1.5" height=".8" fill="#b9a9c9"/><rect x="4.4" y="1.4" width="1.5" height=".8" fill="#b9a9c9"/><rect x="1.4" y="3.6" width="1.5" height=".8" fill="#b9a9c9"/><rect x="4.4" y="3.6" width="1.5" height=".8" fill="#b9a9c9"/><rect x="0.5" y="6.4" width="6.2" height="4.6" fill="#8a8a90"/><rect x="0.5" y="9" width="6.2" height="2" fill="#55565c"/><rect x="7" y="3.8" width="4.5" height="7.2" rx=".5" fill="#9ea6b4"/><rect x="7.4" y="4.4" width="3.8" height="3.2" fill="#4fa8f0"/><rect x="8" y="9" width="2.4" height="2" fill="#4a4c54"/></svg>
<div class="t " style="left:900.80px;top:464px;font-size:11px;line-height:16px;color:#7d94b5;font-weight:normal;">报备客户</div>
<svg class="a" style="left:965.80px;top:466.00px;" width="11.4" height="11.2" viewBox="0 0 11.4 11.2" preserveAspectRatio="none"><circle cx="5.3" cy="6" r="5.1" fill="#e8305a"/><circle cx="5.3" cy="6" r="3.3" fill="#e6d6e4"/><circle cx="5.3" cy="6" r="2" fill="#e8305a"/><path d="M5.3 6 L8.6 2.6" stroke="#2fb4f5" stroke-width="1.5"/><path d="M7.4 1.4 L8.8 -0.2 L9.6 1.4 L11.4 2.2 L9.8 3.8 L8.4 3.6 Z" fill="#2f86e6"/></svg>
<div class="t " style="left:979.30px;top:464px;font-size:11px;line-height:16px;color:#7d94b5;font-weight:normal;">报备项目</div>
<svg class="a" style="left:1044.50px;top:466.00px;" width="11.4" height="11.2" viewBox="0 0 11.4 11.2" preserveAspectRatio="none"><path d="M0.4 1.4 L2.2 1.4 L3.4 7.6 L9.4 7.6" fill="none" stroke="#8e98a6" stroke-width="1"/><path d="M2.6 2.4 L10.6 2.4 L9.6 6.4 L3.4 6.4 Z" fill="#c9d0d8"/><path d="M3 3.6 L10.2 3.6 M3.2 5 L9.8 5" stroke="#8e98a6" stroke-width=".6"/><circle cx="4.2" cy="9.4" r="1" fill="#3f7bd8"/><circle cx="8.6" cy="9.4" r="1" fill="#3f7bd8"/></svg>
<div class="t " style="left:1057.50px;top:464px;font-size:11px;line-height:16px;color:#7d94b5;font-weight:normal;">伙伴报单</div>
<svg class="a" style="left:1123.20px;top:466.00px;" width="11.4" height="11.2" viewBox="0 0 11.4 11.2" preserveAspectRatio="none"><path d="M4.4 3.6 L10.4 9.8" stroke="#9a4a3a" stroke-width="1.9" stroke-linecap="round"/><path d="M0.6 4.2 L3.8 0.8 L6.8 2.2 L4.2 5 L2.6 4.2 L1.6 5.2 Z" fill="#8a8f98"/></svg>
<div class="t " style="left:1136.60px;top:464px;font-size:11px;line-height:16px;color:#7d94b5;font-weight:normal;">服务工单</div>
<div class="btn" style="left:197.20px;top:499.40px;width:59.60px"></div>
<div class="t " style="left:223.20px;top:505px;font-size:11px;line-height:16px;color:#757575;font-weight:normal;">新增</div>
<svg class="a" style="left:207.90px;top:508.00px;" width="9" height="9" viewBox="0 0 9 9" preserveAspectRatio="none"><path d="M4.5 0 L4.5 9 M0 4.5 L9 4.5" stroke="#3a3a3a" stroke-width="1.7"/></svg>
<div class="btn" style="left:260.40px;top:499.40px;width:59.80px"></div>
<div class="t " style="left:287.10px;top:505px;font-size:11px;line-height:16px;color:#757575;font-weight:normal;">修改</div>
<svg class="a" style="left:269.20px;top:506.00px;" width="13" height="13" viewBox="0 0 13 13" preserveAspectRatio="none"><path d="M1 12 L1.7 8.6 L8.8 1.5 L11.5 4.2 L4.4 11.3 Z M9.6 0.8 C10.2 0.2 11.1 0.2 11.7 0.8 L12.2 1.3 C12.8 1.9 12.8 2.8 12.2 3.4 L12 3.6 L9.4 1 Z" fill="#3a3a3a"/><path d="M3 9.4 L9 3.4" stroke="#fff" stroke-width=".7"/></svg>
<div class="btn" style="left:324.00px;top:499.40px;width:59.60px"></div>
<div class="t " style="left:350.00px;top:505px;font-size:11px;line-height:16px;color:#757575;font-weight:normal;">删除</div>
<svg class="a" style="left:334.60px;top:508.00px;" width="9" height="9" viewBox="0 0 9 9" preserveAspectRatio="none"><path d="M0.6 0.6 L8.4 8.4 M8.4 0.6 L0.6 8.4" stroke="#404040" stroke-width="1.8"/></svg>
<div class="btn" style="left:387.20px;top:499.40px;width:82.20px"></div>
<div class="t " style="left:413.60px;top:505px;font-size:11px;line-height:16px;color:#757575;font-weight:normal;">群发邮件</div>
<svg class="a" style="left:395.80px;top:507.90px;" width="13" height="9.6" viewBox="0 0 13 9.6" preserveAspectRatio="none"><rect width="13" height="9.6" rx=".6" fill="#555"/><path d="M0.6 0.8 L6.5 5.6 L12.4 0.8 M0.6 9 L4.7 4.9 M12.4 9 L8.3 4.9" fill="none" stroke="#fff" stroke-width="1.25"/></svg>
<div class="btn" style="left:473.00px;top:499.40px;width:81.40px"></div>
<div class="t " style="left:499.00px;top:505px;font-size:11px;line-height:16px;color:#757575;font-weight:normal;">群发短信</div>
<svg class="a" style="left:481.40px;top:506.90px;" width="13.6" height="12.6" viewBox="0 0 13.6 12.6" preserveAspectRatio="none"><path d="M0.6 0.6 L13 0.6 L13 9 L4 9 L0.6 12 Z" fill="none" stroke="#626262" stroke-width="1.15" stroke-linejoin="round"/></svg>
<div class="btn" style="left:558.00px;top:499.40px;width:70.80px"></div>
<div class="t " style="left:584.00px;top:505px;font-size:11px;line-height:16px;color:#757575;font-weight:normal;">时间轴</div>
<svg class="a" style="left:566.40px;top:505.80px;" width="13.6" height="13.6" viewBox="0 0 13.6 13.6" preserveAspectRatio="none"><circle cx="6.8" cy="6.8" r="6.2" fill="none" stroke="#4a4a4a" stroke-width="1.1"/><path d="M6.8 3.1999999999999997 L6.8 7.2 L10.2 7.2" fill="none" stroke="#4a4a4a" stroke-width="1.1"/></svg>
<div class="btn" style="left:632.50px;top:499.40px;width:82.20px"></div>
<div class="t " style="left:658.60px;top:505px;font-size:11px;line-height:16px;color:#757575;font-weight:normal;">修改历史</div>
<svg class="a" style="left:641.00px;top:505.80px;" width="13.6" height="13.6" viewBox="0 0 13.6 13.6" preserveAspectRatio="none"><circle cx="6.8" cy="6.8" r="6.2" fill="none" stroke="#4a4a4a" stroke-width="1.1"/><path d="M6.8 3.1999999999999997 L6.8 7.2 L10.2 7.2" fill="none" stroke="#4a4a4a" stroke-width="1.1"/></svg>
<div class="btn" style="left:718.80px;top:499.40px;width:81.00px"></div>
<div class="t " style="left:744.60px;top:505px;font-size:11px;line-height:16px;color:#757575;font-weight:normal;">图表分析</div>
<svg class="a" style="left:726.80px;top:506.20px;" width="14" height="13" viewBox="0 0 14 13" preserveAspectRatio="none"><path d="M0.6 0 L0.6 12.2 L13.2 12.2" fill="none" stroke="#555" stroke-width="1.15"/><path d="M2.7 4.3 L5.7 2 L9.2 4.1 L13 2.8 M2.7 8.5 L5.7 6.2 L9.2 8 L13 6.3" fill="none" stroke="#555" stroke-width="1" stroke-linejoin="round"/></svg>
<div class="btn" style="left:803.90px;top:499.40px;width:59.70px"></div>
<div class="t " style="left:830.00px;top:505px;font-size:11px;line-height:16px;color:#757575;font-weight:normal;">导入</div>
<svg class="a" style="left:812.40px;top:506.10px;" width="12.6" height="12.4" viewBox="0 0 12.6 12.4" preserveAspectRatio="none"><path d="M5.3 0 L7.3 0 L7.3 3.6 L9.6 3.6 L6.3 7.4 L3 3.6 L5.3 3.6 Z" fill="#484848"/><rect x="0" y="9.6" width="12.6" height="2.6" fill="#484848"/></svg>
<div class="btn" style="left:867.40px;top:499.40px;width:59.50px"></div>
<div class="t " style="left:893.50px;top:505px;font-size:11px;line-height:16px;color:#757575;font-weight:normal;">导出</div>
<svg class="a" style="left:876.00px;top:506.10px;" width="12.6" height="12.4" viewBox="0 0 12.6 12.4" preserveAspectRatio="none"><path d="M5.3 7.4 L7.3 7.4 L7.3 3.8 L9.6 3.8 L6.3 0 L3 3.8 L5.3 3.8 Z" fill="#484848"/><rect x="0" y="9.6" width="12.6" height="2.6" fill="#484848"/></svg>
<div class="btn" style="left:930.50px;top:499.40px;width:60.00px"></div>
<div class="t " style="left:956.60px;top:505px;font-size:11px;line-height:16px;color:#757575;font-weight:normal;">帮助</div>
<svg class="a" style="left:938.80px;top:506.30px;" width="12.8" height="12.8" viewBox="0 0 12.8 12.8" preserveAspectRatio="none"><circle cx="6.4" cy="6.4" r="5.7" fill="none" stroke="#f5a623" stroke-width="1.3"/><text x="6.4" y="10" font-family="Liberation Sans, sans-serif" font-size="10.4" font-weight="bold" fill="#f5a623" text-anchor="middle">?</text></svg>
<div class="a" style="left:195.40px;top:532.00px;width:1081.60px;height:31.70px;background:#f1f1f1"></div>
<div class="t " style="left:202.00px;top:541px;font-size:11px;line-height:16px;color:#474747;font-weight:bold;">姓名</div>
<div class="t " style="left:275.20px;top:541px;font-size:11px;line-height:16px;color:#474747;font-weight:bold;">客户</div>
<div class="t " style="left:487.00px;top:541px;font-size:11px;line-height:16px;color:#474747;font-weight:bold;">属性</div>
<div class="t " style="left:551.00px;top:541px;font-size:11px;line-height:16px;color:#474747;font-weight:bold;">所属部门</div>
<div class="t " style="left:633.10px;top:541px;font-size:11px;line-height:16px;color:#474747;font-weight:bold;">职务</div>
<div class="t " style="left:706.70px;top:541px;font-size:11px;line-height:16px;color:#474747;font-weight:bold;">组织角色</div>
<div class="t " style="left:798.60px;top:541px;font-size:11px;line-height:16px;color:#474747;font-weight:bold;">手机</div>
<div class="t " style="left:893.70px;top:541px;font-size:11px;line-height:16px;color:#474747;font-weight:bold;">邮箱</div>
<div class="t " style="left:1022.50px;top:541px;font-size:11px;line-height:16px;color:#474747;font-weight:bold;">电话</div>
<div class="t " style="left:1114.20px;top:541px;font-size:11px;line-height:16px;color:#474747;font-weight:bold;">任务</div>
<div class="t " style="left:1205.60px;top:541px;font-size:11px;line-height:16px;color:#474747;font-weight:bold;">所有者</div>
<div class="a" style="left:1270px;top:540px;width:7px;height:60px;overflow:hidden"><div class="t" style="left:5.1px;top:1px;font-size:11px;line-height:16px;font-weight:bold;color:#474747">状态</div><div class="t" style="left:5.1px;top:36px;font-size:11px;line-height:16px;color:#333">启用</div></div>
<div class="t " style="left:202.00px;top:576px;font-size:11px;line-height:16px;color:#333;font-weight:normal;">张博士</div>
<div class="t " style="left:275.20px;top:576px;font-size:11px;line-height:16px;color:#428bca;font-weight:normal;">杭州网易再顾科技有限公司</div>
<div class="pill" style="left:468.9px;top:573.10px;width:59px;background:#8c3a92">合作伙伴</div>
<div class="t " style="left:798.60px;top:576px;font-size:11px;line-height:16px;color:#428bca;font-weight:normal;">13800001235</div>
<div class="t " style="left:1114.20px;top:576px;font-size:11px;line-height:16px;color:#428bca;font-weight:normal;">新增</div>
<div class="t " style="left:1205.60px;top:576px;font-size:11px;line-height:16px;color:#333;font-weight:normal;">袁朗</div>
</body></html>
